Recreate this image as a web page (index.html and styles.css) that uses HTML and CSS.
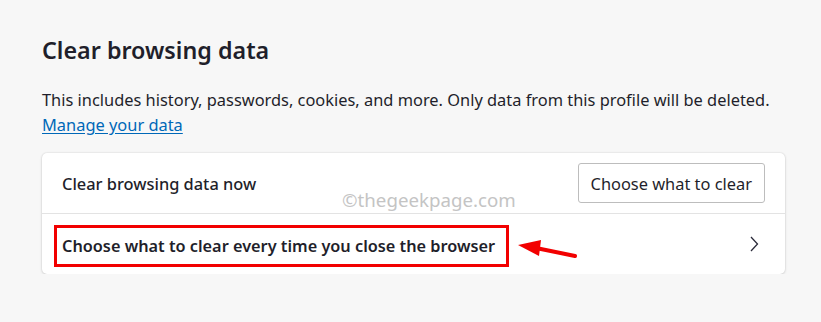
FILE: index.html
```html
<!DOCTYPE html>
<html>
<head>
<meta charset="utf-8">
<link rel="stylesheet" href="styles.css">
</head>
<body>
<main class="page">
  <h1 class="title">Clear browsing data</h1>
  <p class="desc">This includes history, passwords, cookies, and more. Only data from this profile will be deleted.<br><a class="link" href="#">Manage your data</a></p>
  <section class="card">
    <div class="row row-top">
      <span class="label">Clear browsing data now</span>
      <span class="watermark">©thegeekpage.com</span>
      <button class="btn">Choose what to clear</button>
    </div>
    <div class="row row-bottom">
      <span class="highlight"><span class="label strong">Choose what to clear every time you close the browser</span></span>
      <svg class="arrow" width="64" height="22" viewBox="0 0 64 22">
        <line x1="18" y1="8" x2="57" y2="16" stroke="#f20000" stroke-width="4" stroke-linecap="round"/>
        <polygon points="0,5 23,0 21,16" fill="#f20000"/>
      </svg>
      <svg class="chev" width="10" height="16" viewBox="0 0 10 16">
        <polyline points="2,1 8.5,8 2,15" fill="none" stroke="#2b2b3a" stroke-width="1.3"/>
      </svg>
    </div>
  </section>
</main>
</body>
</html>
```
FILE: styles.css
```css
html, body {
  margin: 0;
  padding: 0;
  background: #f7f7f7;
}
body {
  font-family: "Noto Sans", "Open Sans", sans-serif;
  color: #1f1f2b;
}
.page {
  padding: 32px 36px 0 42px;
  width: 743px;
}
.title {
  margin: 0;
  font-size: 23.3px;
  font-weight: 600;
  line-height: 36px;
}
.desc {
  margin: 19px 0 0;
  font-size: 16.4px;
  line-height: 25px;
}
.link {
  color: #0068b8;
  text-decoration: underline;
  text-underline-offset: 2px;
}
.card {
  margin-top: 16px;
  background: #fff;
  border-radius: 5px;
  box-shadow: 0 0 2px rgba(0,0,0,0.14), 0 1px 3px rgba(0,0,0,0.12);
}
.row {
  display: flex;
  align-items: center;
  height: 60px;
  padding: 0 20px;
  position: relative;
}
.row-top {
  border-bottom: 1px solid #e3e3e3;
}
.label {
  font-size: 16.4px;
  font-weight: 500;
}
.strong {
  font-weight: 600;
  font-size: 16.3px;
}
.watermark {
  position: absolute;
  left: 300px;
  top: 34px;
  font-size: 18.7px;
  color: #c4c4c4;
}
.btn {
  margin-left: auto;
  height: 40px;
  padding: 0 12px;
  background: #fff;
  border: 1px solid #bdbdbd;
  border-radius: 3px;
  font-family: inherit;
  font-size: 16.4px;
  color: #1f1f2b;
}
.highlight {
  margin-left: -8px;
  margin-top: 3px;
  padding: 0 11px 0 5px;
  height: 36px;
  display: flex;
  align-items: center;
  border: 3px solid #f20000;
}
.arrow {
  position: absolute;
  left: 476px;
  top: 26px;
}
.chev {
  margin-left: auto;
  margin-right: 6px;
}
```
